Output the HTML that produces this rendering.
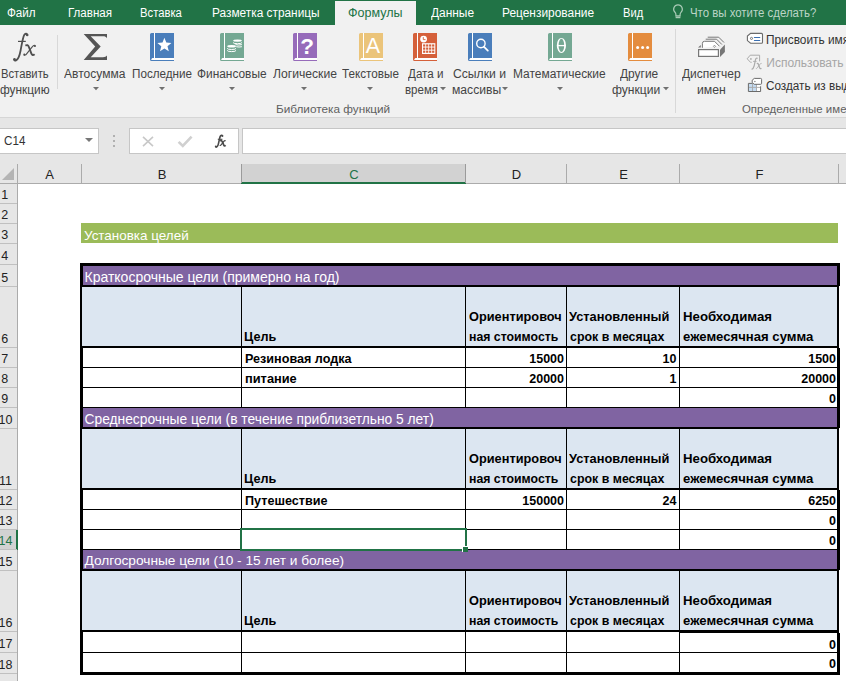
<!DOCTYPE html><html><head><meta charset="utf-8"><style>
*{margin:0;padding:0;box-sizing:border-box}
html,body{width:846px;height:681px;overflow:hidden;background:#fff;font-family:"Liberation Sans",sans-serif}
.ab{position:absolute}
.t{position:absolute;white-space:nowrap;line-height:1}
svg{position:absolute;overflow:visible}

</style></head><body>
<div class="ab" style="left:0px;top:0px;width:846px;height:25px;background:#217346;"></div>
<div class="ab" style="left:335px;top:1px;width:81px;height:24px;background:#f1f1f1;"></div>
<div class="t" style="left:7.00px;top:7.19px;font-size:12.3px;color:#fff;transform-origin:0 0;transform:scaleX(0.9482);">Файл</div>
<div class="t" style="left:67.66px;top:7.19px;font-size:12.3px;color:#fff;transform-origin:0 0;transform:scaleX(0.9392);">Главная</div>
<div class="t" style="left:140.48px;top:7.19px;font-size:12.3px;color:#fff;transform-origin:0 0;transform:scaleX(0.9161);">Вставка</div>
<div class="t" style="left:211.54px;top:7.19px;font-size:12.3px;color:#fff;transform-origin:0 0;transform:scaleX(0.9643);">Разметка страницы</div>
<div class="t" style="left:430.60px;top:7.19px;font-size:12.3px;color:#fff;transform-origin:0 0;transform:scaleX(0.9689);">Данные</div>
<div class="t" style="left:501.83px;top:7.19px;font-size:12.3px;color:#fff;transform-origin:0 0;transform:scaleX(0.9690);">Рецензирование</div>
<div class="t" style="left:622.89px;top:7.19px;font-size:12.3px;color:#fff;transform-origin:0 0;transform:scaleX(0.9065);">Вид</div>
<div class="t" style="left:348.40px;top:7.19px;font-size:12.3px;color:#217346;transform-origin:0 0;transform:scaleX(1.0176);">Формулы</div>
<div class="t" style="left:690.00px;top:7.19px;font-size:12.3px;color:#bcd5c6;transform-origin:0 0;transform:scaleX(0.9287);">Что вы хотите сделать?</div>
<svg style="left:672px;top:4px" width="12" height="16" viewBox="0 0 12 16"><path d="M6 .9a4.3 4.3 0 0 0-3 7.4c.6.6.9 1.3.9 2.1v1.5h4.2v-1.5c0-.8.3-1.5.9-2.1A4.3 4.3 0 0 0 6 .9z" fill="none" stroke="#a9cbb6" stroke-width="1.2"/><path d="M3.6 13.4h4.8" stroke="#a9cbb6" stroke-width="1.6"/></svg>
<div class="ab" style="left:0px;top:25px;width:846px;height:92px;background:#f1f1f1;"></div>
<div class="ab" style="left:0px;top:117px;width:846px;height:1px;background:#d6d6d6;"></div>
<svg style="left:8px;top:30px" width="32" height="34" viewBox="0 0 32 34"><path d="M19.3 4.6C18.6 3.4 17.2 3.4 16.2 4.9C15 6.8 14 13 12.6 20.5C11.6 25.8 10.4 29.2 8 30.4C7 30.8 6.1 30.4 6.1 29.5" fill="none" stroke="#505050" stroke-width="1.8"/><circle cx="19.2" cy="5" r="1.3" fill="#505050"/><circle cx="6.5" cy="29.2" r="1.3" fill="#505050"/><path d="M10 11.4H17.8" stroke="#505050" stroke-width="1.2"/><path d="M17.4 15.6C18.9 14.6 20.2 15 21 17.2L23.4 23.6C24 25.2 25 25.6 26.6 24.2" fill="none" stroke="#505050" stroke-width="1.9"/><path d="M27.2 15.4C26.2 14.9 25.2 15.5 23.8 17.3L18.6 23.9C17.6 25.2 16.6 25.5 15.8 24.8" fill="none" stroke="#505050" stroke-width="1.1"/><circle cx="26.9" cy="16" r="1.1" fill="#505050"/><circle cx="16.3" cy="24.6" r="1" fill="#505050"/></svg>
<div class="t" style="left:0.50px;top:67.84px;font-size:12px;color:#444;transform-origin:0 0;transform:scaleX(0.9365);">Вставить</div>
<div class="t" style="left:0.00px;top:83.84px;font-size:12px;color:#444;transform-origin:0 0;transform:scaleX(0.9882);">функцию</div>
<div class="ab" style="left:57px;top:35px;width:1px;height:54px;background:#d8d8d8;"></div>
<svg style="left:80px;top:30px" width="32" height="34"><path d="M3.7,4 L27,4 L27,8.2 C26,6.6 25,6.2 23,6.2 L10.7,6.2 L20.7,16.5 L10.7,27.2 L23,27.2 C25,27.2 26,26.8 27,25.5 L27,30 L3.7,30 L15.2,16.5 Z" fill="#555"/></svg>
<div class="t" style="left:63.90px;top:67.84px;font-size:12px;color:#444;transform-origin:0 0;transform:scaleX(1.0030);">Автосумма</div>
<svg style="left:92.5px;top:87.4px" width="6" height="3.5"><path d="M0 0h6l-3 3.2z" fill="#707070"/></svg>
<svg style="left:150px;top:33px" width="25" height="28" viewBox="0 0 25 28"><path d="M1.6 0H24V28H1.6A1.6 1.6 0 0 1 0 26.4V1.6A1.6 1.6 0 0 1 1.6 0z" fill="#4a7ebb"/><rect x="4" y="0" width="1" height="25" fill="#fff"/><path d="M2.6 25H24V27H1.2C1.4 26 1.8 25.2 2.6 25z" fill="#fff"/><path d="M14.4 4.8 L16.3 9.6 L21.4 9.9 L17.5 13.2 L18.8 18.2 L14.4 15.4 L10 18.2 L11.3 13.2 L7.4 9.9 L12.5 9.6 Z" fill="#fff"/></svg>
<div class="t" style="left:131.60px;top:67.84px;font-size:12px;color:#444;transform-origin:0 0;transform:scaleX(0.9735);">Последние</div>
<svg style="left:158.5px;top:87.4px" width="6" height="3.5"><path d="M0 0h6l-3 3.2z" fill="#707070"/></svg>
<svg style="left:220px;top:33px" width="25" height="28" viewBox="0 0 25 28"><path d="M1.6 0H24V28H1.6A1.6 1.6 0 0 1 0 26.4V1.6A1.6 1.6 0 0 1 1.6 0z" fill="#74a893"/><rect x="4" y="0" width="1" height="25" fill="#fff"/><path d="M2.6 25H24V27H1.2C1.4 26 1.8 25.2 2.6 25z" fill="#fff"/><g fill="none" stroke="#fff" stroke-width="1"><ellipse cx="17.5" cy="7.6" rx="4.4" ry="1.2" fill="#fff" stroke="none"/><path d="M13.1 9.5A4.4 1.2 0 0 0 21.9 9.5M15.5 11.6A4.4 1.2 0 0 0 21.9 11.6M16.2 13.7A4.4 1.2 0 0 0 21.9 13.7"/><ellipse cx="11.6" cy="13.3" rx="4.4" ry="1.2" fill="#fff" stroke="none"/><path d="M7.2 15.3A4.4 1.2 0 0 0 16 15.3M7.2 17.4A4.4 1.2 0 0 0 16 17.4"/></g></svg>
<div class="t" style="left:197.30px;top:67.84px;font-size:12px;color:#444;transform-origin:0 0;transform:scaleX(0.9906);">Финансовые</div>
<svg style="left:229.1px;top:86.9px" width="6" height="3.5"><path d="M0 0h6l-3 3.2z" fill="#707070"/></svg>
<svg style="left:293px;top:33px" width="25" height="28" viewBox="0 0 25 28"><path d="M1.6 0H24V28H1.6A1.6 1.6 0 0 1 0 26.4V1.6A1.6 1.6 0 0 1 1.6 0z" fill="#966bba"/><rect x="4" y="0" width="1" height="25" fill="#fff"/><path d="M2.6 25H24V27H1.2C1.4 26 1.8 25.2 2.6 25z" fill="#fff"/><text x="14" y="21.2" text-anchor="middle" font-family="Liberation Sans" font-weight="bold" font-size="22.5" fill="#fff">?</text></svg>
<div class="t" style="left:272.70px;top:67.84px;font-size:12px;color:#444;transform-origin:0 0;transform:scaleX(1.0125);">Логические</div>
<svg style="left:301.4px;top:86.9px" width="6" height="3.5"><path d="M0 0h6l-3 3.2z" fill="#707070"/></svg>
<svg style="left:359px;top:33px" width="25" height="28" viewBox="0 0 25 28"><path d="M1.6 0H24V28H1.6A1.6 1.6 0 0 1 0 26.4V1.6A1.6 1.6 0 0 1 1.6 0z" fill="#ebc47a"/><rect x="4" y="0" width="1" height="25" fill="#fff"/><path d="M2.6 25H24V27H1.2C1.4 26 1.8 25.2 2.6 25z" fill="#fff"/><text x="13.85" y="19.9" text-anchor="middle" font-family="Liberation Sans" font-size="21.5" fill="#fff">A</text></svg>
<div class="t" style="left:342.10px;top:67.84px;font-size:12px;color:#444;transform-origin:0 0;transform:scaleX(0.9753);">Текстовые</div>
<svg style="left:367.2px;top:86.9px" width="6" height="3.5"><path d="M0 0h6l-3 3.2z" fill="#707070"/></svg>
<svg style="left:413px;top:33px" width="25" height="28" viewBox="0 0 25 28"><path d="M1.6 0H24V28H1.6A1.6 1.6 0 0 1 0 26.4V1.6A1.6 1.6 0 0 1 1.6 0z" fill="#d5603a"/><rect x="4" y="0" width="1" height="25" fill="#fff"/><path d="M2.6 25H24V27H1.2C1.4 26 1.8 25.2 2.6 25z" fill="#fff"/><circle cx="10.6" cy="6.1" r="3.4" fill="#fff"/><path d="M10.3 4.1V6.6H12.5" stroke="#d5603a" stroke-width="0.9" fill="none"/><rect x="9" y="10.2" width="13.3" height="10.8" fill="#fff"/><rect x="10.1" y="11.4" width="2.2" height="2.2" fill="#d5603a"/><rect x="10.1" y="14.5" width="2.2" height="2.2" fill="#d5603a"/><rect x="10.1" y="17.6" width="2.2" height="2.2" fill="#d5603a"/><rect x="13.1" y="11.4" width="2.2" height="2.2" fill="#d5603a"/><rect x="13.1" y="14.5" width="2.2" height="2.2" fill="#d5603a"/><rect x="13.1" y="17.6" width="2.2" height="2.2" fill="#d5603a"/><rect x="16.1" y="11.4" width="2.2" height="2.2" fill="#d5603a"/><rect x="16.1" y="14.5" width="2.2" height="2.2" fill="#d5603a"/><rect x="16.1" y="17.6" width="2.2" height="2.2" fill="#d5603a"/><rect x="19.1" y="11.4" width="2.2" height="2.2" fill="#d5603a"/><rect x="19.1" y="14.5" width="2.2" height="2.2" fill="#d5603a"/><rect x="19.1" y="17.6" width="2.2" height="2.2" fill="#d5603a"/></svg>
<div class="t" style="left:407.90px;top:67.84px;font-size:12px;color:#444;transform-origin:0 0;transform:scaleX(0.9692);">Дата и</div>
<div class="t" style="left:404.60px;top:83.84px;font-size:12px;color:#444;transform-origin:0 0;transform:scaleX(0.9596);">время</div>
<svg style="left:440.4px;top:86.60000000000001px" width="6" height="3.5"><path d="M0 0h6l-3 3.2z" fill="#707070"/></svg>
<svg style="left:468px;top:33px" width="25" height="28" viewBox="0 0 25 28"><path d="M1.6 0H24V28H1.6A1.6 1.6 0 0 1 0 26.4V1.6A1.6 1.6 0 0 1 1.6 0z" fill="#4a7ebb"/><rect x="4" y="0" width="1" height="25" fill="#fff"/><path d="M2.6 25H24V27H1.2C1.4 26 1.8 25.2 2.6 25z" fill="#fff"/><circle cx="12.9" cy="10.5" r="4.2" fill="none" stroke="#fff" stroke-width="1.4"/><path d="M15.8 13.6L19.8 17.6" stroke="#fff" stroke-width="1.8" stroke-linecap="round"/></svg>
<div class="t" style="left:453.30px;top:67.84px;font-size:12px;color:#444;transform-origin:0 0;transform:scaleX(1.0140);">Ссылки и</div>
<div class="t" style="left:451.60px;top:83.84px;font-size:12px;color:#444;transform-origin:0 0;transform:scaleX(1.0104);">массивы</div>
<svg style="left:502.1px;top:86.60000000000001px" width="6" height="3.5"><path d="M0 0h6l-3 3.2z" fill="#707070"/></svg>
<svg style="left:548px;top:33px" width="25" height="28" viewBox="0 0 25 28"><path d="M1.6 0H24V28H1.6A1.6 1.6 0 0 1 0 26.4V1.6A1.6 1.6 0 0 1 1.6 0z" fill="#74a893"/><rect x="4" y="0" width="1" height="25" fill="#fff"/><path d="M2.6 25H24V27H1.2C1.4 26 1.8 25.2 2.6 25z" fill="#fff"/><ellipse cx="13.4" cy="12.4" rx="4.6" ry="7.5" fill="#fff"/><ellipse cx="13.4" cy="12.4" rx="2.8" ry="6.6" fill="#74a893"/><path d="M10 12.6H17" stroke="#fff" stroke-width="1.3"/></svg>
<div class="t" style="left:513.00px;top:67.84px;font-size:12px;color:#444;transform-origin:0 0;transform:scaleX(0.9966);">Математические</div>
<svg style="left:556.5px;top:86.9px" width="6" height="3.5"><path d="M0 0h6l-3 3.2z" fill="#707070"/></svg>
<svg style="left:628px;top:33px" width="25" height="28" viewBox="0 0 25 28"><path d="M1.6 0H24V28H1.6A1.6 1.6 0 0 1 0 26.4V1.6A1.6 1.6 0 0 1 1.6 0z" fill="#e48c3e"/><rect x="4" y="0" width="1" height="25" fill="#fff"/><path d="M2.6 25H24V27H1.2C1.4 26 1.8 25.2 2.6 25z" fill="#fff"/><circle cx="9.6" cy="14.6" r="1.5" fill="#fff"/><circle cx="14.6" cy="14.6" r="1.5" fill="#fff"/><circle cx="19.6" cy="14.6" r="1.5" fill="#fff"/></svg>
<div class="t" style="left:620.30px;top:67.84px;font-size:12px;color:#444;transform-origin:0 0;transform:scaleX(0.9936);">Другие</div>
<div class="t" style="left:612.00px;top:83.84px;font-size:12px;color:#444;transform-origin:0 0;transform:scaleX(1.0065);">функции</div>
<svg style="left:662.8px;top:86.60000000000001px" width="6" height="3.5"><path d="M0 0h6l-3 3.2z" fill="#707070"/></svg>
<div class="ab" style="left:675px;top:29px;width:1px;height:84px;background:#d8d8d8;"></div>
<svg style="left:690px;top:28px" width="40" height="34" viewBox="0 0 40 34"><path d="M17.7 9.2H28.7L34 14.5M15.7 11.2H26.6L31.9 16.5" stroke="#777" stroke-width="1" fill="none"/><path d="M12.4 19.8V15.4Q12.4 13.3 14.5 13.3H24.5L29.5 18.3" stroke="#777" stroke-width="1" fill="#fff"/><path d="M8 19.6L10.8 17V19.6Z" fill="#777"/><rect x="8.6" y="21.6" width="19.8" height="6.8" fill="#fff" stroke="#777" stroke-width="1.2"/><path d="M30 29V21.8L34.9 16.6V24Z" fill="#777"/><path d="M24.5 17.2l1.1 1.1-1.1 1.1-1.1-1.1z" fill="none" stroke="#777" stroke-width=".8"/></svg>
<div class="t" style="left:682.00px;top:67.84px;font-size:12px;color:#444;transform-origin:0 0;transform:scaleX(0.9996);">Диспетчер</div>
<div class="t" style="left:697.40px;top:83.84px;font-size:12px;color:#444;transform-origin:0 0;transform:scaleX(1.0207);">имен</div>
<svg style="left:744px;top:30px" width="22" height="18" viewBox="0 0 22 18"><path d="M6.6 3.4H17.5Q18.5 3.4 18.5 4.4V12.2Q18.5 13.2 17.5 13.2H6.6L3.4 10.6V6.1Z" fill="#fff" stroke="#6a6a6a" stroke-width="1.1"/><circle cx="7.5" cy="8.4" r="1.05" fill="none" stroke="#6a6a6a" stroke-width=".9"/><path d="M10.4 7.5H15.8M10.4 10.5H15.8" stroke="#3b70b2" stroke-width="1.1" stroke-linecap="round"/></svg>
<div class="t" style="left:766.30px;top:33.84px;font-size:12px;color:#333;transform-origin:0 0;transform:scaleX(0.988)">Присвоить имя</div>
<svg style="left:744px;top:52px" width="22" height="20" viewBox="0 0 22 20"><path d="M15.6 9.4V3.2H6.2L3.2 6.8L6.5 10.3H7.6" fill="none" stroke="#ababab" stroke-width="1"/><circle cx="6.9" cy="6.9" r=".9" fill="#ababab"/><path d="M13.6 6.6C13.2 5.8 12.2 5.9 11.7 7C11.2 8.3 10.8 11.4 10.1 14C9.6 16 9 17.1 7.6 17.4" fill="none" stroke="#ababab" stroke-width="1.2"/><path d="M9.1 9.4H12.6" stroke="#ababab" stroke-width=".9"/><path d="M12.8 11.6C13.6 11.2 14.2 11.5 14.6 12.8L15.6 15.8C16 16.8 16.6 16.8 17.4 16.2" fill="none" stroke="#ababab" stroke-width="1.3"/><path d="M17.6 11.5C17 11.2 16.4 11.6 15.6 12.6L13.6 15.4C13 16.4 12.4 16.7 11.9 16.3" fill="none" stroke="#ababab" stroke-width=".9"/></svg>
<div class="t" style="left:766.30px;top:57.34px;font-size:12px;color:#a6a6a6;">Использовать в формуле</div>
<svg style="left:744px;top:74px" width="22" height="20" viewBox="0 0 22 20"><rect x="4.9" y="9.9" width="11.2" height="7.1" fill="#fff"/><rect x="4.9" y="9.9" width="7.6" height="7.1" fill="#c5dcf2"/><path d="M8.5 9.9V17M12.5 9.9V17M4.9 13.4H16.1" stroke="#a8a8a8" stroke-width=".9"/><path d="M8.6 9.4H4.4V17.5H16.6V12.3" fill="none" stroke="#6a6a6a" stroke-width="1"/><path d="M10.3 4.4H16.6Q17.6 4.4 17.6 5.4V9.3Q17.6 10.3 16.6 10.3H10.3L8.2 8.6V6.2Z" fill="#fff" stroke="#6a6a6a" stroke-width="1"/><path d="M10.9 6.7l.8.8-.8.8-.8-.8z" fill="#6a6a6a"/></svg>
<div class="t" style="left:766.30px;top:79.84px;font-size:12px;color:#333;transform-origin:0 0;transform:scaleX(0.976)">Создать из выделенного</div>
<div class="t" style="left:276.20px;top:103.85px;font-size:11.4px;color:#606060;transform-origin:0 0;transform:scaleX(1.0327);">Библиотека функций</div>
<div class="t" style="left:741.90px;top:103.85px;font-size:11.4px;color:#606060;letter-spacing:0.05px">Определенные имена</div>
<div class="ab" style="left:0px;top:118px;width:846px;height:46px;background:#e6e6e6;"></div>
<div class="ab" style="left:-1px;top:128px;width:100px;height:26px;background:#fff;border:1px solid #c6c6c6"></div>
<div class="t" style="left:4.30px;top:135.42px;font-size:12.5px;color:#333;transform-origin:0 0;transform:scaleX(0.9313);">C14</div>
<svg style="left:85px;top:137.7px" width="8" height="4"><path d="M0 0h8l-4 4z" fill="#777"/></svg>
<div class="ab" style="left:113px;top:135px;width:2px;height:2px;background:#b0b0b0;"></div>
<div class="ab" style="left:113px;top:140px;width:2px;height:2px;background:#b0b0b0;"></div>
<div class="ab" style="left:113px;top:145px;width:2px;height:2px;background:#b0b0b0;"></div>
<div class="ab" style="left:129px;top:128px;width:110px;height:26px;background:#fff;border:1px solid #c6c6c6"></div>
<svg style="left:142px;top:136px" width="12" height="11"><path d="M1 .8L11 10.2M11 .8L1 10.2" stroke="#c8c8c8" stroke-width="1.6"/></svg>
<svg style="left:177px;top:135px" width="16" height="13"><path d="M1.6 6.8L5.8 11L14.6 1.6" stroke="#d0d0d0" stroke-width="2.6" fill="none"/></svg>
<svg style="left:212px;top:133px" width="16" height="16" viewBox="0 0 16 16"><path d="M10.6 3C10.1 1.9 8.8 2 8.2 3.4C7.6 4.9 7 8.6 6.2 11.6C5.7 13.4 5 14.2 3.6 14.1" fill="none" stroke="#4a4a4a" stroke-width="1.6"/><circle cx="10.4" cy="3.1" r="1" fill="#4a4a4a"/><circle cx="3.8" cy="13.6" r="1" fill="#4a4a4a"/><path d="M5.8 6.3H10.4" stroke="#4a4a4a" stroke-width="1.1"/><path d="M8.2 7.9C9.2 7.4 9.9 7.8 10.5 9.2L11.8 12.2C12.2 13.1 12.8 13.1 13.7 12.3" fill="none" stroke="#4a4a4a" stroke-width="1.7"/><path d="M13.6 7.9C13 7.5 12.3 7.8 11.4 8.9L9.3 11.7C8.7 12.5 8.1 12.7 7.7 12.3" fill="none" stroke="#4a4a4a" stroke-width="1.2"/></svg>
<div class="ab" style="left:242px;top:128px;width:610px;height:26px;background:#fff;border:1px solid #c6c6c6"></div>
<div class="ab" style="left:0px;top:164px;width:846px;height:20px;background:#e6e6e6;"></div>
<div class="ab" style="left:241px;top:164px;width:224px;height:19px;background:#d2d2d2;"></div>
<div class="ab" style="left:0px;top:183px;width:846px;height:1px;background:#ababab;"></div>
<div class="ab" style="left:241px;top:182px;width:225px;height:2px;background:#217346;"></div>
<div class="ab" style="left:17px;top:164px;width:1px;height:19px;background:#ababab;"></div>
<div class="ab" style="left:81px;top:164px;width:1px;height:19px;background:#ababab;"></div>
<div class="ab" style="left:241px;top:164px;width:1px;height:19px;background:#9b9b9b;"></div>
<div class="ab" style="left:465px;top:164px;width:1px;height:19px;background:#9b9b9b;"></div>
<div class="ab" style="left:566px;top:164px;width:1px;height:19px;background:#ababab;"></div>
<div class="ab" style="left:679px;top:164px;width:1px;height:19px;background:#ababab;"></div>
<div class="ab" style="left:838px;top:164px;width:1px;height:19px;background:#ababab;"></div>
<svg style="left:0;top:166px" width="16" height="16"><path d="M14 2V14H2Z" fill="#b4b4b4"/></svg>
<div class="t" style="left:-150.50px;width:400px;text-align:center;top:168.30px;font-size:13px;color:#222;">A</div>
<div class="t" style="left:-38.00px;width:400px;text-align:center;top:168.30px;font-size:13px;color:#222;">B</div>
<div class="t" style="left:154.00px;width:400px;text-align:center;top:168.30px;font-size:13px;color:#217346;">C</div>
<div class="t" style="left:316.50px;width:400px;text-align:center;top:168.30px;font-size:13px;color:#222;">D</div>
<div class="t" style="left:423.50px;width:400px;text-align:center;top:168.30px;font-size:13px;color:#222;">E</div>
<div class="t" style="left:559.50px;width:400px;text-align:center;top:168.30px;font-size:13px;color:#222;">F</div>
<div class="ab" style="left:0px;top:184px;width:17px;height:497px;background:#e6e6e6;"></div>
<div class="ab" style="left:17px;top:164px;width:1px;height:517px;background:#ababab;"></div>
<div class="ab" style="left:0px;top:203px;width:17px;height:1px;background:#c0c0c0;"></div>
<div class="t" style="left:-195.40px;width:400px;text-align:center;top:189.22px;font-size:12.5px;color:#222;">1</div>
<div class="ab" style="left:0px;top:223px;width:17px;height:1px;background:#c0c0c0;"></div>
<div class="t" style="left:-195.40px;width:400px;text-align:center;top:209.22px;font-size:12.5px;color:#222;">2</div>
<div class="ab" style="left:0px;top:243px;width:17px;height:1px;background:#c0c0c0;"></div>
<div class="t" style="left:-195.40px;width:400px;text-align:center;top:229.22px;font-size:12.5px;color:#222;">3</div>
<div class="ab" style="left:0px;top:264px;width:17px;height:1px;background:#c0c0c0;"></div>
<div class="t" style="left:-195.40px;width:400px;text-align:center;top:250.22px;font-size:12.5px;color:#222;">4</div>
<div class="ab" style="left:0px;top:286px;width:17px;height:1px;background:#c0c0c0;"></div>
<div class="t" style="left:-195.40px;width:400px;text-align:center;top:272.22px;font-size:12.5px;color:#222;">5</div>
<div class="ab" style="left:0px;top:347px;width:17px;height:1px;background:#c0c0c0;"></div>
<div class="t" style="left:-195.40px;width:400px;text-align:center;top:333.22px;font-size:12.5px;color:#222;">6</div>
<div class="ab" style="left:0px;top:367px;width:17px;height:1px;background:#c0c0c0;"></div>
<div class="t" style="left:-195.40px;width:400px;text-align:center;top:353.22px;font-size:12.5px;color:#222;">7</div>
<div class="ab" style="left:0px;top:387px;width:17px;height:1px;background:#c0c0c0;"></div>
<div class="t" style="left:-195.40px;width:400px;text-align:center;top:373.22px;font-size:12.5px;color:#222;">8</div>
<div class="ab" style="left:0px;top:407px;width:17px;height:1px;background:#c0c0c0;"></div>
<div class="t" style="left:-195.40px;width:400px;text-align:center;top:393.22px;font-size:12.5px;color:#222;">9</div>
<div class="ab" style="left:0px;top:428px;width:17px;height:1px;background:#c0c0c0;"></div>
<div class="t" style="left:-194.50px;width:400px;text-align:center;top:414.22px;font-size:12.5px;color:#222;">10</div>
<div class="ab" style="left:0px;top:489px;width:17px;height:1px;background:#c0c0c0;"></div>
<div class="t" style="left:-194.50px;width:400px;text-align:center;top:475.22px;font-size:12.5px;color:#222;">11</div>
<div class="ab" style="left:0px;top:509px;width:17px;height:1px;background:#c0c0c0;"></div>
<div class="t" style="left:-194.50px;width:400px;text-align:center;top:495.22px;font-size:12.5px;color:#222;">12</div>
<div class="ab" style="left:0px;top:529px;width:17px;height:1px;background:#c0c0c0;"></div>
<div class="t" style="left:-194.50px;width:400px;text-align:center;top:515.22px;font-size:12.5px;color:#222;">13</div>
<div class="ab" style="left:0px;top:530px;width:17px;height:20px;background:#d2d2d2;"></div>
<div class="ab" style="left:16px;top:530px;width:2px;height:20px;background:#217346;"></div>
<div class="ab" style="left:0px;top:549px;width:17px;height:1px;background:#c0c0c0;"></div>
<div class="t" style="left:-194.50px;width:400px;text-align:center;top:535.22px;font-size:12.5px;color:#217346;">14</div>
<div class="ab" style="left:0px;top:570px;width:17px;height:1px;background:#c0c0c0;"></div>
<div class="t" style="left:-194.50px;width:400px;text-align:center;top:556.22px;font-size:12.5px;color:#222;">15</div>
<div class="ab" style="left:0px;top:631px;width:17px;height:1px;background:#c0c0c0;"></div>
<div class="t" style="left:-194.50px;width:400px;text-align:center;top:617.22px;font-size:12.5px;color:#222;">16</div>
<div class="ab" style="left:0px;top:652px;width:17px;height:1px;background:#c0c0c0;"></div>
<div class="t" style="left:-194.50px;width:400px;text-align:center;top:638.22px;font-size:12.5px;color:#222;">17</div>
<div class="ab" style="left:0px;top:673px;width:17px;height:1px;background:#c0c0c0;"></div>
<div class="t" style="left:-194.50px;width:400px;text-align:center;top:659.22px;font-size:12.5px;color:#222;">18</div>
<div class="ab" style="left:81px;top:223px;width:757px;height:20px;background:#9bbb59;"></div>
<div class="t" style="left:84.00px;top:228.61px;font-size:13.45px;color:#fff;">Установка целей</div>
<div class="ab" style="left:80px;top:263px;width:760px;height:412px;background:#000;"></div>
<div class="ab" style="left:83px;top:266px;width:754px;height:19px;background:#8064a2;"></div>
<div class="ab" style="left:82px;top:287px;width:159px;height:59px;background:#dce6f1;"></div>
<div class="ab" style="left:242px;top:287px;width:223px;height:59px;background:#dce6f1;"></div>
<div class="ab" style="left:466px;top:287px;width:100px;height:59px;background:#dce6f1;"></div>
<div class="ab" style="left:567px;top:287px;width:112px;height:59px;background:#dce6f1;"></div>
<div class="ab" style="left:680px;top:287px;width:157px;height:59px;background:#dce6f1;"></div>
<div class="ab" style="left:839px;top:286px;width:1px;height:62px;background:#fff;"></div>
<div class="ab" style="left:83px;top:348px;width:158px;height:19px;background:#fff;"></div>
<div class="ab" style="left:242px;top:348px;width:223px;height:19px;background:#fff;"></div>
<div class="ab" style="left:466px;top:348px;width:100px;height:19px;background:#fff;"></div>
<div class="ab" style="left:567px;top:348px;width:112px;height:19px;background:#fff;"></div>
<div class="ab" style="left:680px;top:348px;width:157px;height:19px;background:#fff;"></div>
<div class="ab" style="left:83px;top:368px;width:158px;height:19px;background:#fff;"></div>
<div class="ab" style="left:242px;top:368px;width:223px;height:19px;background:#fff;"></div>
<div class="ab" style="left:466px;top:368px;width:100px;height:19px;background:#fff;"></div>
<div class="ab" style="left:567px;top:368px;width:112px;height:19px;background:#fff;"></div>
<div class="ab" style="left:680px;top:368px;width:157px;height:19px;background:#fff;"></div>
<div class="ab" style="left:83px;top:388px;width:158px;height:19px;background:#fff;"></div>
<div class="ab" style="left:242px;top:388px;width:223px;height:19px;background:#fff;"></div>
<div class="ab" style="left:466px;top:388px;width:100px;height:19px;background:#fff;"></div>
<div class="ab" style="left:567px;top:388px;width:112px;height:19px;background:#fff;"></div>
<div class="ab" style="left:680px;top:388px;width:157px;height:19px;background:#fff;"></div>
<div class="ab" style="left:83px;top:408px;width:754px;height:19px;background:#8064a2;"></div>
<div class="ab" style="left:82px;top:429px;width:159px;height:59px;background:#dce6f1;"></div>
<div class="ab" style="left:242px;top:429px;width:223px;height:59px;background:#dce6f1;"></div>
<div class="ab" style="left:466px;top:429px;width:100px;height:59px;background:#dce6f1;"></div>
<div class="ab" style="left:567px;top:429px;width:112px;height:59px;background:#dce6f1;"></div>
<div class="ab" style="left:680px;top:429px;width:157px;height:59px;background:#dce6f1;"></div>
<div class="ab" style="left:839px;top:428px;width:1px;height:62px;background:#fff;"></div>
<div class="ab" style="left:83px;top:490px;width:158px;height:19px;background:#fff;"></div>
<div class="ab" style="left:242px;top:490px;width:223px;height:19px;background:#fff;"></div>
<div class="ab" style="left:466px;top:490px;width:100px;height:19px;background:#fff;"></div>
<div class="ab" style="left:567px;top:490px;width:112px;height:19px;background:#fff;"></div>
<div class="ab" style="left:680px;top:490px;width:157px;height:19px;background:#fff;"></div>
<div class="ab" style="left:83px;top:510px;width:158px;height:19px;background:#fff;"></div>
<div class="ab" style="left:242px;top:510px;width:223px;height:19px;background:#fff;"></div>
<div class="ab" style="left:466px;top:510px;width:100px;height:19px;background:#fff;"></div>
<div class="ab" style="left:567px;top:510px;width:112px;height:19px;background:#fff;"></div>
<div class="ab" style="left:680px;top:510px;width:157px;height:19px;background:#fff;"></div>
<div class="ab" style="left:83px;top:530px;width:158px;height:19px;background:#fff;"></div>
<div class="ab" style="left:242px;top:530px;width:223px;height:19px;background:#fff;"></div>
<div class="ab" style="left:466px;top:530px;width:100px;height:19px;background:#fff;"></div>
<div class="ab" style="left:567px;top:530px;width:112px;height:19px;background:#fff;"></div>
<div class="ab" style="left:680px;top:530px;width:157px;height:19px;background:#fff;"></div>
<div class="ab" style="left:83px;top:550px;width:754px;height:19px;background:#8064a2;"></div>
<div class="ab" style="left:82px;top:571px;width:159px;height:59px;background:#dce6f1;"></div>
<div class="ab" style="left:242px;top:571px;width:223px;height:59px;background:#dce6f1;"></div>
<div class="ab" style="left:466px;top:571px;width:100px;height:59px;background:#dce6f1;"></div>
<div class="ab" style="left:567px;top:571px;width:112px;height:59px;background:#dce6f1;"></div>
<div class="ab" style="left:680px;top:571px;width:157px;height:59px;background:#dce6f1;"></div>
<div class="ab" style="left:839px;top:570px;width:1px;height:63px;background:#fff;"></div>
<div class="ab" style="left:83px;top:632px;width:158px;height:20px;background:#fff;"></div>
<div class="ab" style="left:242px;top:632px;width:223px;height:20px;background:#fff;"></div>
<div class="ab" style="left:466px;top:632px;width:100px;height:20px;background:#fff;"></div>
<div class="ab" style="left:567px;top:632px;width:112px;height:20px;background:#fff;"></div>
<div class="ab" style="left:680px;top:632px;width:157px;height:20px;background:#fff;"></div>
<div class="ab" style="left:680px;top:632px;width:157px;height:1px;background:#000;"></div>
<div class="ab" style="left:83px;top:653px;width:158px;height:19px;background:#fff;"></div>
<div class="ab" style="left:242px;top:653px;width:223px;height:19px;background:#fff;"></div>
<div class="ab" style="left:466px;top:653px;width:100px;height:19px;background:#fff;"></div>
<div class="ab" style="left:567px;top:653px;width:112px;height:19px;background:#fff;"></div>
<div class="ab" style="left:680px;top:653px;width:157px;height:19px;background:#fff;"></div>
<div class="ab" style="left:240px;top:528px;width:227px;height:23px;border:2px solid #217346"></div>
<div class="ab" style="left:462px;top:546px;width:6px;height:6px;background:#fff;"></div>
<div class="ab" style="left:463px;top:547px;width:5px;height:5px;background:#217346;"></div>
<div class="t" style="left:84.50px;top:270.15px;font-size:14px;color:#fff;">Краткосрочные цели (примерно на год)</div>
<div class="t" style="left:244.30px;top:330.00px;font-size:13px;color:#000;font-weight:bold;transform-origin:0 0;transform:scaleX(0.9746);">Цель</div>
<div class="t" style="left:469.10px;top:310.00px;font-size:13px;color:#000;font-weight:bold;transform-origin:0 0;transform:scaleX(0.9829);">Ориентировоч</div>
<div class="t" style="left:469.10px;top:330.00px;font-size:13px;color:#000;font-weight:bold;transform-origin:0 0;transform:scaleX(0.9455);">ная стоимость</div>
<div class="t" style="left:569.10px;top:310.00px;font-size:13px;color:#000;font-weight:bold;transform-origin:0 0;transform:scaleX(0.9859);">Установленный</div>
<div class="t" style="left:569.60px;top:330.00px;font-size:13px;color:#000;font-weight:bold;transform-origin:0 0;transform:scaleX(0.9528);">срок в месяцах</div>
<div class="t" style="left:682.80px;top:310.00px;font-size:13px;color:#000;font-weight:bold;transform-origin:0 0;transform:scaleX(1.0177);">Необходимая</div>
<div class="t" style="left:682.80px;top:330.00px;font-size:13px;color:#000;font-weight:bold;transform-origin:0 0;transform:scaleX(1.0098);">ежемесячная сумма</div>
<div class="t" style="left:245.00px;top:352.00px;font-size:13px;color:#000;font-weight:bold;transform-origin:0 0;transform:scaleX(0.9694);">Резиновая лодка</div>
<div class="t" style="right:282.00px;top:352.92px;font-size:12.5px;color:#000;font-weight:bold;">15000</div>
<div class="t" style="right:169.50px;top:352.92px;font-size:12.5px;color:#000;font-weight:bold;">10</div>
<div class="t" style="right:10.00px;top:352.92px;font-size:12.5px;color:#000;font-weight:bold;">1500</div>
<div class="t" style="left:245.00px;top:372.00px;font-size:13px;color:#000;font-weight:bold;transform-origin:0 0;transform:scaleX(0.9850);">питание</div>
<div class="t" style="right:282.00px;top:372.92px;font-size:12.5px;color:#000;font-weight:bold;">20000</div>
<div class="t" style="right:169.50px;top:372.92px;font-size:12.5px;color:#000;font-weight:bold;">1</div>
<div class="t" style="right:10.00px;top:372.92px;font-size:12.5px;color:#000;font-weight:bold;">20000</div>
<div class="t" style="right:10.00px;top:392.92px;font-size:12.5px;color:#000;font-weight:bold;">0</div>
<div class="t" style="left:84.50px;top:412.62px;font-size:13.8px;color:#fff;">Среднесрочные цели (в течение приблизетльно 5 лет)</div>
<div class="t" style="left:244.30px;top:472.00px;font-size:13px;color:#000;font-weight:bold;transform-origin:0 0;transform:scaleX(0.9746);">Цель</div>
<div class="t" style="left:469.10px;top:452.00px;font-size:13px;color:#000;font-weight:bold;transform-origin:0 0;transform:scaleX(0.9829);">Ориентировоч</div>
<div class="t" style="left:469.10px;top:472.00px;font-size:13px;color:#000;font-weight:bold;transform-origin:0 0;transform:scaleX(0.9455);">ная стоимость</div>
<div class="t" style="left:569.10px;top:452.00px;font-size:13px;color:#000;font-weight:bold;transform-origin:0 0;transform:scaleX(0.9859);">Установленный</div>
<div class="t" style="left:569.60px;top:472.00px;font-size:13px;color:#000;font-weight:bold;transform-origin:0 0;transform:scaleX(0.9528);">срок в месяцах</div>
<div class="t" style="left:682.80px;top:452.00px;font-size:13px;color:#000;font-weight:bold;transform-origin:0 0;transform:scaleX(1.0177);">Необходимая</div>
<div class="t" style="left:682.80px;top:472.00px;font-size:13px;color:#000;font-weight:bold;transform-origin:0 0;transform:scaleX(1.0098);">ежемесячная сумма</div>
<div class="t" style="left:245.00px;top:494.00px;font-size:13px;color:#000;font-weight:bold;transform-origin:0 0;transform:scaleX(0.9693);">Путешествие</div>
<div class="t" style="right:282.00px;top:494.92px;font-size:12.5px;color:#000;font-weight:bold;">150000</div>
<div class="t" style="right:169.50px;top:494.92px;font-size:12.5px;color:#000;font-weight:bold;">24</div>
<div class="t" style="right:10.00px;top:494.92px;font-size:12.5px;color:#000;font-weight:bold;">6250</div>
<div class="t" style="right:10.00px;top:514.92px;font-size:12.5px;color:#000;font-weight:bold;">0</div>
<div class="t" style="right:10.00px;top:534.92px;font-size:12.5px;color:#000;font-weight:bold;">0</div>
<div class="t" style="left:84.50px;top:554.40px;font-size:13.7px;color:#fff;">Долгосрочные цели (10 - 15 лет и более)</div>
<div class="t" style="left:244.30px;top:614.00px;font-size:13px;color:#000;font-weight:bold;transform-origin:0 0;transform:scaleX(0.9746);">Цель</div>
<div class="t" style="left:469.10px;top:594.00px;font-size:13px;color:#000;font-weight:bold;transform-origin:0 0;transform:scaleX(0.9829);">Ориентировоч</div>
<div class="t" style="left:469.10px;top:614.00px;font-size:13px;color:#000;font-weight:bold;transform-origin:0 0;transform:scaleX(0.9455);">ная стоимость</div>
<div class="t" style="left:569.10px;top:594.00px;font-size:13px;color:#000;font-weight:bold;transform-origin:0 0;transform:scaleX(0.9859);">Установленный</div>
<div class="t" style="left:569.60px;top:614.00px;font-size:13px;color:#000;font-weight:bold;transform-origin:0 0;transform:scaleX(0.9528);">срок в месяцах</div>
<div class="t" style="left:682.80px;top:594.00px;font-size:13px;color:#000;font-weight:bold;transform-origin:0 0;transform:scaleX(1.0177);">Необходимая</div>
<div class="t" style="left:682.80px;top:614.00px;font-size:13px;color:#000;font-weight:bold;transform-origin:0 0;transform:scaleX(1.0098);">ежемесячная сумма</div>
<div class="t" style="right:10.00px;top:638.92px;font-size:12.5px;color:#000;font-weight:bold;">0</div>
<div class="t" style="right:10.00px;top:657.92px;font-size:12.5px;color:#000;font-weight:bold;">0</div>
</body></html>
